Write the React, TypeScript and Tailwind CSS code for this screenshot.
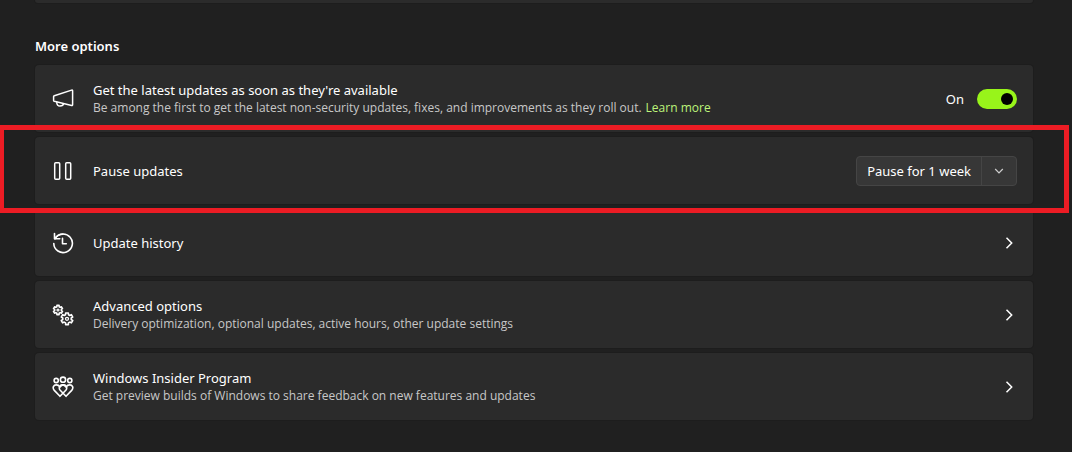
import React, { useState } from "react"

const Megaphone = () => (
    <svg width="22" height="22" viewBox="0 0 22 22" fill="none" stroke="currentColor" strokeWidth="1.5" strokeLinejoin="round" strokeLinecap="round">
        <path d="M2.300 7.700 19.600 2.100q1-.3 1 .7v14q0 1-1 .7L2.300 13.300q-.7-.2-.7-.9V8.600q0-.7.7-.9z" />
        <path d="M4.800 14.200c-.3 2.200 1.200 3.900 3.200 3.900s3.400-1.100 3.600-2.400" />
    </svg>
)

const PauseIcon = () => (
    <svg width="22" height="22" viewBox="0 0 22 22" fill="none" stroke="currentColor" strokeWidth="1.5">
        <rect x="2.700" y="2.700" width="5" height="16.600" rx="1" />
        <rect x="13.700" y="2.700" width="5" height="16.600" rx="1" />
    </svg>
)

const History = () => (
    <svg width="22" height="22" viewBox="0 0 22 22" fill="none" stroke="currentColor" strokeWidth="1.6" strokeLinecap="round" strokeLinejoin="round">
        <path d="M1.800 11.500A9.300 9.300 0 1 0 3 6.700" />
        <path d="M2.500 1.600v5.200h5.300" />
        <path d="M3 6.600A9.300 9.300 0 0 1 11 2.200" />
        <path d="M10.500 6.200v5.600h3.800" />
    </svg>
)

// outline of a gear with short, wide teeth
const gearPoints = (cx: number, cy: number, outer: number, inner: number, teeth: number) => {
    const points: string[] = []
    const step = (Math.PI * 2) / teeth
    for (let i = 0; i < teeth; i++) {
        const a = (i + 0.5) * step
        const corners = [[-0.33, inner], [-0.22, outer], [0.22, outer], [0.33, inner]]
        corners.forEach(([offset, r]) => {
            const t = a + offset * step
            points.push(`${(cx + r * Math.cos(t)).toFixed(2)},${(cy + r * Math.sin(t)).toFixed(2)}`)
        })
    }
    return points.join(" ")
}

const Gears = () => (
    <svg width="22" height="22" viewBox="0 0 22 22" fill="none" stroke="currentColor" strokeWidth="1.6" strokeLinejoin="round">
        <polygon points={gearPoints(6, 6, 4.7, 3.4, 6)} />
        <circle cx="6" cy="6" r="1" strokeWidth="1.200" />
        <polygon points={gearPoints(15, 14.8, 6, 4.3, 6)} />
        <circle cx="15" cy="14.800" r="1.500" strokeWidth="1.300" />
    </svg>
)

const heart = "M8 20.300 2.300 14.400C0 11.700 1.600 8.900 4.300 8.900c1.700 0 2.900.9 3.700 2.100.9-1.400 2.100-2.100 3.500-2.100 2.900 0 4.200 3 2.300 5.400z"

const Insider = () => (
    <svg width="22" height="22" viewBox="0 0 22 22" fill="none" stroke="currentColor" strokeWidth="1.6" strokeLinejoin="round">
        <circle cx="4.200" cy="4.500" r="2.100" />
        <circle cx="11" cy="3.700" r="2.600" />
        <circle cx="17.800" cy="4.500" r="2.100" />
        <path d={heart} />
        <path d={heart} transform="matrix(-1 0 0 1 22 0)" />
    </svg>
)

const ChevronRight = () => (
    <svg width="16" height="16" viewBox="0 0 16 16" fill="none" stroke="currentColor" strokeWidth="1.5">
        <path d="M5.500 2.800 10.700 8l-5.200 5.200" />
    </svg>
)

const ChevronDown = () => (
    <svg width="10" height="10" viewBox="0 0 10 10" fill="none" stroke="currentColor" strokeWidth="1.2">
        <path d="M1.200 3 5 6.800 8.800 3" />
    </svg>
)

const card = "relative flex min-h-[67px] w-full items-center rounded bg-[#2b2b2b] pr-4 pl-[17px] text-left shadow-[0_0_0_1px_#1d1d1d]"
const descText = "block font-['Open_Sans','Segoe_UI',sans-serif] text-xs leading-[18px] text-[#c8c8c8]"

const links = [
    { title: "Update history", desc: "", icon: <History /> },
    {
        title: "Advanced options",
        desc: "Delivery optimization, optional updates, active hours, other update settings",
        icon: <Gears />,
    },
    {
        title: "Windows Insider Program",
        desc: "Get preview builds of Windows to share feedback on new features and updates",
        icon: <Insider />,
    },
]

const App: React.FC = () => {
    const [latest, setLatest] = useState(true)

    return (
        <main className="min-h-screen overflow-hidden bg-[#202020] pr-[39px] pl-[35px] font-['Noto_Sans','Segoe_UI',sans-serif] text-[13px] leading-[18px] text-white">
            <div className="h-[3px] rounded-b bg-[#2b2b2b] shadow-[0_0_0_1px_#1d1d1d]" />
            <h2 className="mt-[34px] mb-[10px] font-semibold">More options</h2>

            <div className="flex flex-col gap-[5px]">
                <div className={card}>
                    <Megaphone />
                    <div className="ml-[19px] flex-1 pt-px">
                        <label htmlFor="latest" className="block">Get the latest updates as soon as they're available</label>
                        <p className={descText}>
                            Be among the first to get the latest non-security updates, fixes, and improvements as they roll out.
                            <a href="#learn" className="ml-1 text-[#bdf47a]">Learn more</a>
                        </p>
                    </div>
                    <span className="mr-[13px]">{latest ? "On" : "Off"}</span>
                    <input
                        id="latest"
                        type="checkbox"
                        role="switch"
                        checked={latest}
                        onChange={(e) => setLatest(e.target.checked)}
                        className="flex h-5 w-10 appearance-none items-center rounded-full bg-[#555] px-1 before:size-3 before:rounded-full before:bg-black checked:justify-end checked:bg-[#98f41a]"
                    />
                </div>

                <div className={card}>
                    <PauseIcon />
                    <span className="ml-[19px] flex-1">Pause updates</span>
                    <div className="flex h-[30px] rounded border border-[#454545] bg-[#373737]">
                        <button className="px-[10px]">Pause for 1 week</button>
                        <button aria-label="Choose pause length" className="flex w-[35px] items-center justify-center border-l border-[#454545] text-[#cfcfcf]">
                            <ChevronDown />
                        </button>
                    </div>
                    <div className="pointer-events-none absolute -inset-x-9 -top-3 -bottom-[9px] z-10 border-5 border-[#ec1c24]" />
                </div>

                {links.map((item) => (
                    <a key={item.title} href="#settings" className={card}>
                        {item.icon}
                        <span className="ml-[19px] flex-1 pt-px">
                            <span className="block">{item.title}</span>
                            {item.desc && <span className={descText}>{item.desc}</span>}
                        </span>
                        <ChevronRight />
                    </a>
                ))}
            </div>
        </main>
    )
}

export default App
